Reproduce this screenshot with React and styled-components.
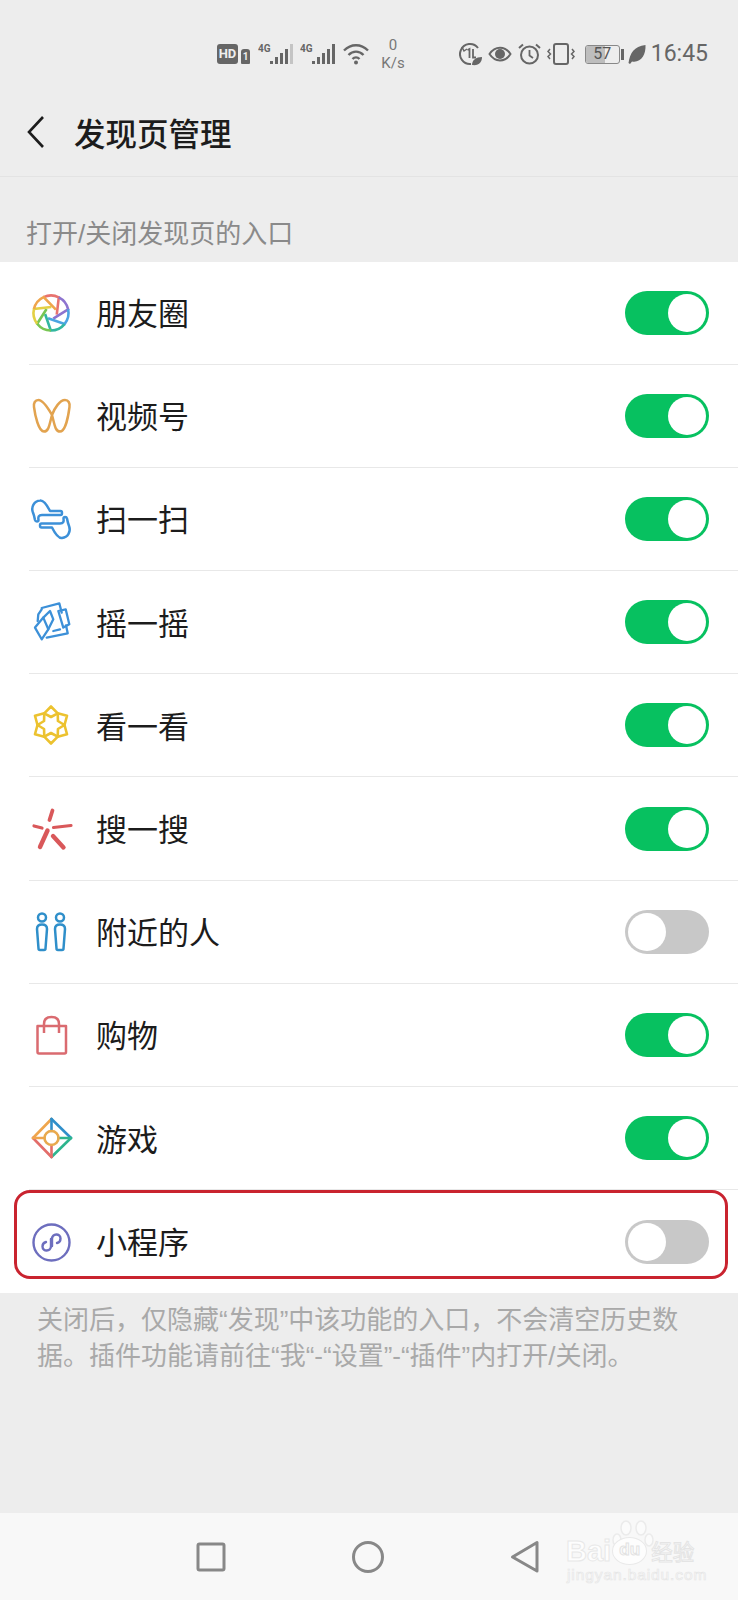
import React from 'react'
import styled, { createGlobalStyle } from 'styled-components'

const GlobalStyle = createGlobalStyle`
  html, body { margin: 0; padding: 0; background: #ededed; }
  body { font-family: 'Noto Sans CJK SC', 'Noto Sans', sans-serif; }
`

const rows = [
  { name: '朋友圈', icon: 'moments', on: true },
  { name: '视频号', icon: 'channels', on: true },
  { name: '扫一扫', icon: 'scan', on: true },
  { name: '摇一摇', icon: 'shake', on: true },
  { name: '看一看', icon: 'look', on: true },
  { name: '搜一搜', icon: 'search', on: true },
  { name: '附近的人', icon: 'nearby', on: false },
  { name: '购物', icon: 'shop', on: true },
  { name: '游戏', icon: 'game', on: true },
  { name: '小程序', icon: 'mini', on: false, marked: true },
]

const polar = (r, deg) => {
  const a = (deg * Math.PI) / 180
  return [22 + r * Math.sin(a), 22 - r * Math.cos(a)]
}

const Moments = () => {
  const colors = ['#e8736f', '#8d74cf', '#4ba4e2', '#33b7a0', '#78c653', '#e3d044', '#efa54c']
  const step = 360 / colors.length
  return colors.map((color, i) => {
    const start = i * step - 25
    const [x1, y1] = polar(17.5, start)
    const [x2, y2] = polar(17.5, start + step)
    const [x3, y3] = polar(6, start + step + 80)
    return (
      <path
        key={color}
        d={`M${x1} ${y1}A17.5 17.5 0 0 1 ${x2} ${y2}L${x3} ${y3}`}
        fill="none"
        stroke={color}
        strokeWidth="2.6"
      />
    )
  })
}

const Look = () =>
  [0, 60, 120, 180, 240, 300].map((deg) => {
    const [a, b] = polar(18.5, deg)
    const [c, d] = polar(13.5, deg + 30)
    const [e, f] = polar(8, deg)
    const [g, h] = polar(13.5, deg - 30)
    return (
      <path
        key={deg}
        d={`M${a} ${b}L${c} ${d}L${e} ${f}L${g} ${h}Z`}
        fill="none"
        stroke="#ecc22f"
        strokeWidth="2.6"
        strokeLinejoin="round"
      />
    )
  })

const icons = {
  moments: <Moments />,
  channels: (
    <path
      d="M23 21C19 14 14 6 9.500 6C6 6 4.500 9 5 13C6 21 9.500 37.500 15 37.500C20 37.500 20.500 30 23 21C25.500 14 31 6 36 6C39.500 6 41 9 40.500 13C39.500 21 36.500 37.500 31 37.500C26 37.500 25.500 30 23 21Z"
      fill="none"
      stroke="#e2a34f"
      strokeWidth="2.500"
    />
  ),
  scan: (
    <g fill="none" stroke="#3c90d8" strokeWidth="2.500" strokeLinejoin="round">
      <path d="M21 14H31.500C33.500 14 33.500 18 31.500 18H13C9.500 18 9 20 9.500 23C9.500 25 6.500 25 6 23C5.500 20 5 18 3.800 15C2 10 5 4 11 3.500C15 3 18 8 21 14Z" />
      <path d="M23 30.500H12.500C10.500 30.500 10.500 26.500 12.500 26.500H31C34.500 26.500 35 24.500 34.500 21.500C34.500 19.500 37.500 19.500 38 21.500C38.500 24.500 39 26.500 40.200 29.500C42 34.500 39 40.500 33 41C29 41.500 26 36.500 23 30.500Z" />
    </g>
  ),
  shake: (
    <g fill="none" stroke="#3c90d8" strokeWidth="2.300" strokeLinejoin="round" strokeLinecap="round">
      <path d="M12.700 8L30.300 3.300L32.700 12.600" />
      <path d="M29.300 11L36.700 9.300L40.300 24.300L34.300 27.600Z" />
      <path d="M17.700 37.600L38.700 33.300L37 25.300" />
      <path d="M6 27.600L14.300 17.600L19.300 29.300L12.700 39.300Z" />
      <path d="M8.700 21L9.300 14.300L12.700 9.300" />
      <path d="M14.300 17.600L21 11L24.300 19.300L19.300 29.300" />
      <path d="M24.300 31L31 29.300" />
    </g>
  ),
  look: <Look />,
  search: (
    <g fill="none" stroke="#d9585a" strokeLinecap="round">
      <path d="M23.500 3.500L20.500 13" strokeWidth="3.800" />
      <path d="M5 19L13 21" strokeWidth="3.200" />
      <path d="M24.500 20.500L42 18.500" strokeWidth="3.200" />
      <path d="M18.500 23.500L11 40" strokeWidth="4.400" />
      <path d="M24 29L34.500 40.500" strokeWidth="4.400" />
    </g>
  ),
  nearby: (
    <g fill="none" stroke="#2f8fca" strokeWidth="2.500">
      <circle cx="13" cy="7.500" r="4" />
      <circle cx="31" cy="7.500" r="4" />
      <path d="M8 19Q8 14.500 13 14.500Q18 14.500 18 19L16.500 38.500Q16.500 40 15 40H11Q9.500 40 9.500 38.500Z" />
      <path d="M26 19Q26 14.500 31 14.500Q36 14.500 36 19L34.500 38.500Q34.500 40 33 40H29Q27.500 40 27.500 38.500Z" />
    </g>
  ),
  shop: (
    <g fill="none" stroke="#da6b70" strokeWidth="2.500" strokeLinejoin="round">
      <path d="M8.500 13H37V39Q37 40.500 35.500 40.500H10Q8.500 40.500 8.500 39Z" />
      <path d="M15 20V11Q15 4 22.500 4Q30 4 30 11V20" />
    </g>
  ),
  game: (
    <g fill="none" strokeWidth="2.600" strokeLinecap="round">
      <path d="M4 22L22.500 3" stroke="#efa54c" />
      <path d="M22.500 3L42 22" stroke="#2f8fca" />
      <path d="M42 22L22.500 41" stroke="#2db58e" />
      <path d="M22.500 41L4 22" stroke="#e36d6a" />
      <path d="M4 22H15.500" stroke="#efa54c" />
      <path d="M22.500 3V15" stroke="#2f8fca" />
      <path d="M29.500 22H42" stroke="#2db58e" />
      <path d="M22.500 29V41" stroke="#e36d6a" />
      <circle cx="22.500" cy="22" r="7" stroke="#e8a94e" />
    </g>
  ),
  mini: (
    <g fill="none" stroke="#6d6ebe" strokeWidth="2.400">
      <circle cx="22.500" cy="22.500" r="18" />
      <path d="M22 19V26C22 32 13.500 32 13.500 26.500C13.500 24 15 22.500 17 22M23 26V19C23 13 31.500 13 31.500 18.500C31.500 21 30 22.500 28 23" strokeLinecap="round" />
    </g>
  ),
}

const StatusIcon = ({ w, h = 24, children }) => (
  <svg width={w} height={h} viewBox={`0 0 ${w} ${h}`} fill="none" stroke="#666" strokeWidth="2">
    {children}
  </svg>
)

const Signal = ({ faded }) => (
  <StatusIcon w={35}>
    <text x="0" y="10" fontFamily="Roboto, sans-serif" fontSize="10" fontWeight="700" fill="#666" stroke="none">4G</text>
    <g stroke="none" fill="#666">
      <rect x="12" y="19" width="3" height="3" />
      <rect x="17" y="15" width="3" height="7" />
      <rect x="22" y="11" width="3" height="11" />
      <rect x="27" y="7" width="3" height="15" />
      <rect x="32" y="2" width="3" height="20" fill={faded ? '#c4c4c4' : '#666'} />
    </g>
  </StatusIcon>
)

const App = () => (
  <Page>
    <GlobalStyle />
    <StatusBar>
      <StatusLeft>
        <HdBadge>HD</HdBadge>
        <SimBadge>1</SimBadge>
        <Signal faded />
        <Signal />
        <StatusIcon w={28}>
          <path d="M2 8.500C9 1.500 19 1.500 26 8.500M6.500 13C11 8.500 17 8.500 21.500 13M10.500 17C12.500 15 15.500 15 17.500 17" strokeWidth="2.400" />
          <circle cx="14" cy="20.500" r="2" fill="#666" stroke="none" />
        </StatusIcon>
        <Speed>
          <span>0</span>
          <span>K/s</span>
        </Speed>
      </StatusLeft>
      <StatusRight>
        <StatusIcon w={23}>
          <path d="M19 6A10 10 0 1 0 12 22" />
          <path d="M3 5L5 9L8 7" strokeWidth="1.500" />
          <path d="M8.500 8L10.500 7V16M14 7V15.500H17" strokeWidth="1.800" />
          <path d="M13 23C13 18 17 15 23 15C23 20 20 24 13 23Z" fill="#666" stroke="none" />
        </StatusIcon>
        <StatusIcon w={24}>
          <path d="M1.500 12C7 3.500 17 3.500 22.500 12C17 20.500 7 20.500 1.500 12Z" />
          <circle cx="12" cy="12" r="5" fill="#666" stroke="none" />
        </StatusIcon>
        <StatusIcon w={23}>
          <circle cx="11.500" cy="13" r="8.500" />
          <path d="M11.500 8V13.500L15 16" strokeWidth="1.800" />
          <path d="M1 6L5 2.500M22 6L18 2.500" />
        </StatusIcon>
        <StatusIcon w={28}>
          <rect x="7" y="2" width="14" height="20" rx="2" />
          <path d="M3 7L1 9.500L3.500 12L1 14.500L3 17M25 7L27 9.500L24.500 12L27 14.500L25 17" strokeWidth="1.500" />
        </StatusIcon>
        <Battery>
          <BatteryFill $level={57} />
          <BatteryLabel>57</BatteryLabel>
        </Battery>
        <BatteryNub />
        <LeafSlot>
          <StatusIcon w={18}>
            <path d="M0.500 21C2 11 6 4.500 17.500 3C18 13 13 21 4 19.500L2 22Z" fill="#666" stroke="none" />
          </StatusIcon>
        </LeafSlot>
        <Clock>16:45</Clock>
      </StatusRight>
    </StatusBar>
    <Header>
      <BackIcon width="20" height="34" viewBox="0 0 20 34">
        <path d="M17 2L3 17L17 32" fill="none" stroke="#1c1c1c" strokeWidth="2.600" />
      </BackIcon>
      <Title>发现页管理</Title>
    </Header>
    <SectionLabel>打开/关闭发现页的入口</SectionLabel>
    <List>
      {rows.map((row, i) => (
        <Row key={row.name} $last={i === rows.length - 1}>
          <RowIcon width="44" height="44" viewBox="0 0 44 44">
            {icons[row.icon]}
          </RowIcon>
          <RowName>{row.name}</RowName>
          <Toggle $on={row.on}>
            <Knob />
          </Toggle>
          {row.marked && <Marker />}
        </Row>
      ))}
    </List>
    <Note>关闭后，仅隐藏“发现”中该功能的入口，不会清空历史数据。插件功能请前往“我“-“设置”-“插件”内打开/关闭。</Note>
    <NavBar>
      <NavButton width="30" height="32" viewBox="0 0 30 32">
        <rect x="2" y="3" width="26" height="26" rx="1.500" />
      </NavButton>
      <NavButton width="34" height="34" viewBox="0 0 34 34">
        <circle cx="17" cy="17" r="14.500" />
      </NavButton>
      <NavButton width="30" height="34" viewBox="0 0 30 34">
        <path d="M27 2.500V31L2.500 17Z" strokeLinejoin="round" />
      </NavButton>
      <Watermark>
        <Paw width="44" height="30" viewBox="0 0 44 30">
          <g fill="#fbfbfb" stroke="#ebebeb" strokeWidth="1.500">
            <ellipse cx="5" cy="20" rx="4" ry="6" />
            <ellipse cx="14" cy="8" rx="5" ry="7" />
            <ellipse cx="29" cy="8" rx="5" ry="7" />
            <ellipse cx="37" cy="20" rx="4" ry="6" />
          </g>
        </Paw>
        <BrandLine>
          <BrandBai>Bai</BrandBai>
          <BrandDu>du</BrandDu>
          <BrandCn>经验</BrandCn>
        </BrandLine>
        <BrandUrl>jingyan.baidu.com</BrandUrl>
      </Watermark>
    </NavBar>
  </Page>
)

const Page = styled.div`
  width: 738px;
  height: 1600px;
  display: flex;
  flex-direction: column;
  background: #ededed;
  overflow: hidden;
`

const StatusBar = styled.div`
  height: 88px;
  box-sizing: border-box;
  padding: 20px 30px 0 217px;
  display: flex;
  align-items: center;
  justify-content: space-between;
  color: #666;
`

const StatusLeft = styled.div`
  display: flex;
  align-items: center;
  gap: 7px;
`

const StatusRight = styled.div`
  display: flex;
  align-items: center;
  gap: 6px;
`

const HdBadge = styled.span`
  width: 21px;
  height: 20px;
  margin-right: -4px;
  border-radius: 3px;
  background: #666;
  color: #eee;
  font: 700 13px/20px Roboto, sans-serif;
  text-align: center;
`

const SimBadge = styled.span`
  width: 9px;
  height: 15px;
  margin: 5px 1px 0 0;
  border-radius: 3px 3px 1px 1px;
  background: #666;
  color: #eee;
  font: 700 10px/15px Roboto, sans-serif;
  text-align: center;
`

const Speed = styled.div`
  display: flex;
  flex-direction: column;
  align-items: center;
  width: 24px;
  margin-left: 4px;
  font: 400 15px/18px Roboto, sans-serif;
  color: #777;
`

const Battery = styled.div`
  position: relative;
  width: 35px;
  height: 19px;
  margin-left: 4px;
  box-sizing: border-box;
  border: 1.500px solid #888;
  border-radius: 3px;
  overflow: hidden;
`

const BatteryFill = styled.div`
  height: 100%;
  width: ${(p) => p.$level}%;
  background: #bdbdbd;
`

const BatteryLabel = styled.span`
  position: absolute;
  inset: 0;
  text-align: center;
  font: 400 16px/16px Roboto, sans-serif;
  color: #555;
`

const BatteryNub = styled.div`
  width: 3px;
  height: 11px;
  margin-left: -5px;
  background: #666;
`

const LeafSlot = styled.div`
  display: flex;
  margin-left: -2px;
`

const Clock = styled.span`
  font: 400 23px/26px Roboto, sans-serif;
  color: #666;
  margin-left: -1px;
`

const Header = styled.div`
  height: 89px;
  box-sizing: border-box;
  padding-left: 26px;
  display: flex;
  align-items: center;
  gap: 28px;
  border-bottom: 1px solid #e3e3e3;
`

const BackIcon = styled.svg`
  flex: none;
`

const Title = styled.h1`
  margin: 0;
  font-size: 31.500px;
  line-height: 44px;
  font-weight: 500;
  color: #1c1c1c;
`

const SectionLabel = styled.div`
  height: 84.500px;
  box-sizing: border-box;
  padding: 36px 0 0 26px;
  font-family: 'Liberation Sans', 'Noto Sans CJK SC', sans-serif;
  font-size: 26px;
  line-height: 42px;
  color: #8a8a8a;
`

const List = styled.div`
  background: #fff;
`

const Row = styled.div`
  position: relative;
  height: 103.200px;
  box-sizing: border-box;
  margin-left: 29px;
  padding-right: 29px;
  display: flex;
  align-items: center;
  border-bottom: ${(p) => (p.$last ? 'none' : '1px solid #e8e8e8')};
`

const RowIcon = styled.svg`
  flex: none;
`

const RowName = styled.span`
  flex: 1;
  margin: -1px 0 0 23px;
  font-size: 31px;
  line-height: 44px;
  color: #1c1c1c;
`

const Toggle = styled.div`
  width: 84px;
  height: 44px;
  box-sizing: border-box;
  padding: 3px;
  border-radius: 22px;
  display: flex;
  justify-content: ${(p) => (p.$on ? 'flex-end' : 'flex-start')};
  background: ${(p) => (p.$on ? '#07c160' : '#c8c8c8')};
`

const Knob = styled.div`
  width: 38px;
  height: 38px;
  border-radius: 50%;
  background: #fff;
`

const Marker = styled.div`
  position: absolute;
  left: -15px;
  right: 10px;
  top: 0;
  bottom: 14px;
  border: 3px solid #c9232f;
  border-radius: 16px;
`

const Note = styled.p`
  flex: 1;
  margin: 0;
  padding: 9px 50px 0 37px;
  font-family: 'Liberation Sans', 'Noto Sans CJK SC', sans-serif;
  font-size: 26px;
  line-height: 36px;
  color: #a9a9a9;
`

const NavBar = styled.div`
  position: relative;
  height: 87px;
  flex: none;
  display: flex;
  align-items: center;
  background: #f8f8f8;
  padding-left: 196px;
  gap: 125px;
`

const NavButton = styled.svg`
  flex: none;
  fill: none;
  stroke: #888;
  stroke-width: 3;
`

const Watermark = styled.div`
  position: absolute;
  left: 566px;
  top: 6px;
  width: 140px;
  height: 70px;
`

const Paw = styled.svg`
  position: absolute;
  left: 46px;
  top: 1px;
`

const BrandLine = styled.div`
  position: absolute;
  left: 0;
  top: 18px;
  display: flex;
  align-items: center;
  white-space: nowrap;
`

const BrandBai = styled.span`
  font: 700 29px/28px 'Liberation Sans', sans-serif;
  color: #fdfdfd;
  -webkit-text-stroke: 1px #e8e8e8;
`

const BrandDu = styled.span`
  width: 33px;
  height: 26px;
  margin-left: 1px;
  border: 1px solid #e9e9e9;
  border-radius: 50%;
  background: #fdfdfd;
  font: 700 17px/24px 'Liberation Sans', sans-serif;
  color: #fdfdfd;
  text-align: center;
  -webkit-text-stroke: 1px #e2e2e2;
`

const BrandCn = styled.span`
  margin-left: 4px;
  font-size: 21.500px;
  line-height: 28px;
  color: #fdfdfd;
  -webkit-text-stroke: 1px #e4e4e4;
`

const BrandUrl = styled.div`
  position: absolute;
  left: 1px;
  top: 47px;
  font: 400 15.500px/18px 'Liberation Sans', sans-serif;
  letter-spacing: 0.900px;
  color: #fdfdfd;
  -webkit-text-stroke: 0.700px #e6e6e6;
  white-space: nowrap;
`

export default App
